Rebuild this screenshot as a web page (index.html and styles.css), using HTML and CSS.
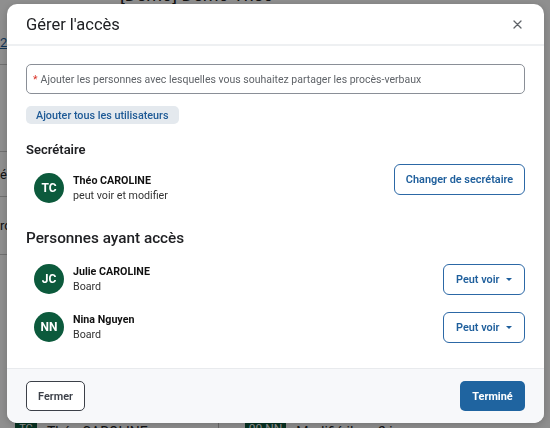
FILE: index.html
```html
<!DOCTYPE html>
<html lang="fr">
<head>
    <meta charset="UTF-8">
    <meta name="viewport" content="width=device-width, initial-scale=1.0">
    <title>Gérer l'accès</title>
    <link rel="stylesheet" href="styles.css">
</head>
<body>
    <!-- page behind the dialog -->
    <div class="page">
        <div class="page-title">[Demo] Demo Theo</div>
        <div class="page-side">
            <div class="side-row first"><span class="side-link">2</span></div>
            <div class="side-row tall"></div>
            <div class="side-row"><span>é</span></div>
            <div class="side-row"><span>rc</span></div>
        </div>
        <div class="page-bottom">
            <span class="mini-avatar">TC</span>
            <span class="mini-name">Théo CAROLINE</span>
            <span class="mini-sep"></span>
            <span class="mini-badge">00 NN</span>
            <span class="mini-name">Modifié il y a 2 jours</span>
        </div>
    </div>

    <div class="overlay"></div>

    <div class="modal">
        <div class="modal-header">
            <h2>Gérer l'accès</h2>
            <button class="close-btn" aria-label="Fermer">
                <svg width="9" height="9" viewBox="0 0 9 9">
                    <path d="M1 1 L8 8 M8 1 L1 8" stroke="#5f6368" stroke-width="1.3" stroke-linecap="round"/>
                </svg>
            </button>
        </div>

        <div class="modal-body">
            <div class="search-input"><span class="req">*</span> Ajouter les personnes avec lesquelles vous souhaitez partager les procès-verbaux</div>
            <button class="chip">Ajouter tous les utilisateurs</button>

            <h3 class="section-title">Secrétaire</h3>
            <div class="member member-secretary">
                <div class="person">
                    <div class="avatar">TC</div>
                    <div class="person-info">
                        <div class="person-name">Théo CAROLINE</div>
                        <div class="person-sub">peut voir et modifier</div>
                    </div>
                </div>
                <button class="btn-outline">Changer de secrétaire</button>
            </div>

            <h3 class="section-title big">Personnes ayant accès</h3>
            <div class="member-list">
                <div class="member">
                    <div class="person">
                        <div class="avatar">JC</div>
                        <div class="person-info">
                            <div class="person-name">Julie CAROLINE</div>
                            <div class="person-sub">Board</div>
                        </div>
                    </div>
                    <button class="btn-outline btn-select">Peut voir <span class="caret"></span></button>
                </div>
                <div class="member">
                    <div class="person">
                        <div class="avatar">NN</div>
                        <div class="person-info">
                            <div class="person-name">Nina Nguyen</div>
                            <div class="person-sub">Board</div>
                        </div>
                    </div>
                    <button class="btn-outline btn-select">Peut voir <span class="caret"></span></button>
                </div>
            </div>
        </div>

        <div class="modal-footer">
            <button class="btn-secondary">Fermer</button>
            <button class="btn-primary">Terminé</button>
        </div>
    </div>
</body>
</html>
```

FILE: styles.css
```css
* {
    box-sizing: border-box;
}

body {
    margin: 0;
    width: 550px;
    height: 428px;
    overflow: hidden;
    font-family: Roboto, 'Liberation Sans', sans-serif;
    color: #202124;
    background: #fff;
}

button {
    font-family: inherit;
    cursor: pointer;
}

/* page underneath */
.page {
    height: 428px;
    position: relative;
    padding-top: 1px;
}

.page-title {
    height: 20px;
    margin-top: -16px;
    padding-left: 120px;
    font-size: 18px;
    line-height: 20px;
    color: #222;
    white-space: nowrap;
}

.page-side {
    width: 30px;
    margin-top: -1px;
}

.side-row {
    border-bottom: 1px solid #c8c8c8;
    font-size: 13px;
    display: flex;
    align-items: center;
    height: 45px;
}

.side-row.first {
    height: 61px;
    align-items: flex-end;
    padding-bottom: 14px;
}

.side-row.tall {
    height: 87px;
}

.side-row:last-child {
    height: 58px;
}

.side-link {
    color: #1f5f9c;
    text-decoration: underline;
}

.page-bottom {
    position: absolute;
    left: 15px;
    bottom: -18px;
    display: flex;
    align-items: flex-start;
    gap: 10px;
    height: 24px;
}

.mini-avatar {
    width: 22px;
    height: 22px;
    background: #0c5a3c;
    color: #fff;
    font-size: 11px;
    text-align: center;
}

.mini-name {
    font-size: 14px;
    margin-top: 2px;
}

.mini-sep {
    width: 1px;
    height: 24px;
    background: #bbb;
    margin-left: 60px;
}

.mini-badge {
    background: #0c5a3c;
    color: #fff;
    font-size: 12px;
    padding: 0 4px;
    margin-left: 16px;
}

.overlay {
    position: fixed;
    inset: 0;
    background: rgba(0, 0, 0, 0.44);
}

/* dialog */
.modal {
    position: fixed;
    left: 7px;
    top: 4px;
    width: 537px;
    height: 419px;
    background: #fff;
    border-radius: 10px;
    overflow: hidden;
    display: flex;
    flex-direction: column;
    box-shadow: 0 2px 10px rgba(0, 0, 0, 0.2);
}

.modal-header {
    height: 42px;
    flex: none;
    display: flex;
    align-items: center;
    justify-content: space-between;
    padding: 0 18px 0 19px;
    border-bottom: 2px solid #eef0f2;
}

.modal-header h2 {
    margin: 0;
    font-size: 16.5px;
    font-weight: 400;
    color: #202124;
}

.close-btn {
    width: 18px;
    height: 18px;
    border: none;
    background: none;
    padding: 0;
    display: flex;
    align-items: center;
    justify-content: center;
}

.modal-body {
    flex: 1;
    padding: 18px 19px 0;
    display: flex;
    flex-direction: column;
    align-items: flex-start;
}

.search-input {
    width: 100%;
    height: 30px;
    border: 1px solid #8a8f97;
    border-radius: 5px;
    padding: 0 6px;
    display: flex;
    align-items: center;
    font-size: 10.5px;
    color: #5f6368;
    white-space: nowrap;
}

.req {
    color: #d93025;
    margin-right: 3px;
}

.chip {
    margin-top: 12px;
    height: 18px;
    padding: 0 10px;
    border: none;
    border-radius: 5px;
    background: #e4e9ee;
    color: #1e5a96;
    font-size: 10.8px;
    font-weight: 500;
}

.section-title {
    margin: 16px 0 0;
    font-size: 13px;
    font-weight: 600;
    line-height: 20px;
}

.section-title.big {
    margin-top: 15px;
    font-size: 15.3px;
    font-weight: 500;
    line-height: 22px;
}

.member {
    width: 100%;
    display: flex;
    align-items: center;
    justify-content: space-between;
    height: 32px;
}

.member-secretary {
    height: 48px;
    margin-top: 4px;
}

.member-secretary .btn-outline {
    align-self: flex-start;
}

.member-list {
    width: 100%;
    margin-top: 14px;
    display: flex;
    flex-direction: column;
    gap: 16px;
}

.person {
    display: flex;
    align-items: center;
    gap: 9px;
    padding-left: 8px;
}

.avatar {
    width: 30px;
    height: 30px;
    border-radius: 50%;
    background: #0c5a3c;
    color: #fff;
    font-size: 12px;
    font-weight: 700;
    display: flex;
    align-items: center;
    justify-content: center;
}

.person-info {
    font-size: 10.7px;
    line-height: 15px;
}

.person-name {
    font-weight: 700;
    color: #111;
}

.person-sub {
    color: #333;
}

.btn-outline {
    height: 31px;
    width: 131px;
    padding: 0;
    border: 1px solid #2c68a6;
    border-radius: 6px;
    background: #fff;
    color: #1f5f9c;
    font-size: 10.9px;
    font-weight: 600;
}

.btn-select {
    width: 82px;
    padding: 0 12px 0 12px;
    display: flex;
    align-items: center;
    justify-content: space-between;
}

.caret {
    flex: none;
    width: 0;
    height: 0;
    border-left: 3px solid transparent;
    border-right: 3px solid transparent;
    border-top: 3px solid #1f5f9c;
}

.modal-footer {
    flex: none;
    height: 55px;
    border-top: 1px solid #e8eaed;
    background: #f7f8fa;
    padding: 12px 19px;
    display: flex;
    justify-content: space-between;
}

.btn-secondary {
    height: 30px;
    width: 59px;
    padding: 0;
    border: 1px solid #3c4048;
    border-radius: 5px;
    background: #fff;
    color: #3c4048;
    font-size: 10.9px;
    font-weight: 600;
}

.btn-primary {
    height: 30px;
    width: 65px;
    padding: 0;
    border: none;
    border-radius: 5px;
    background: #1f64a0;
    color: #fff;
    font-size: 10.9px;
    font-weight: 700;
}
```
